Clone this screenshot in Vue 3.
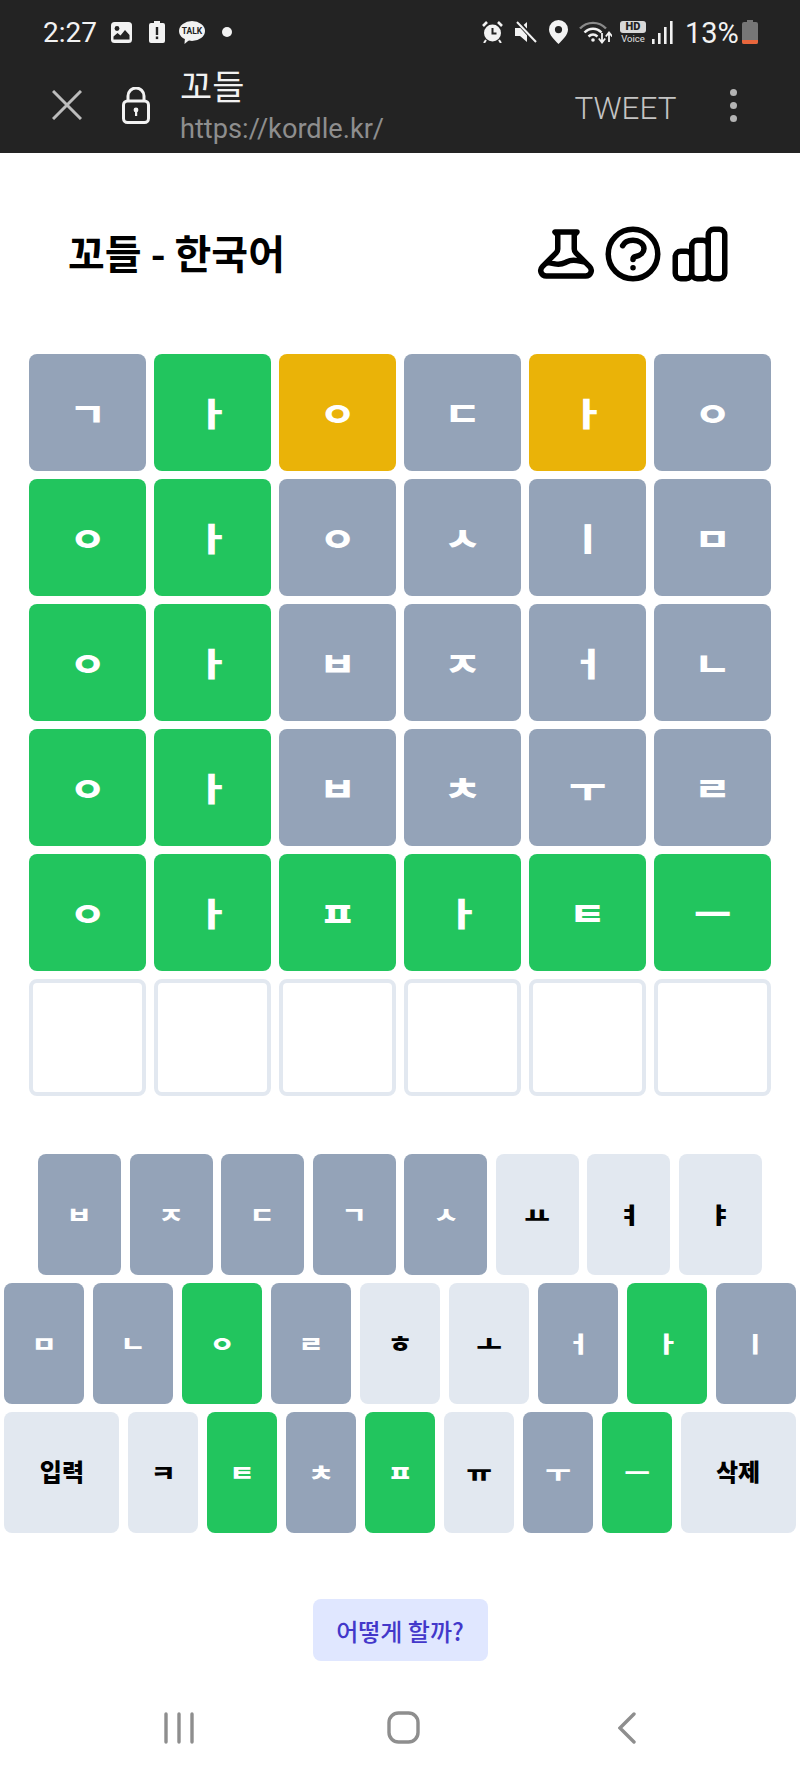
<script setup>
import { ref } from 'vue';

// a = absent, g = correct, y = present
const board = ref([
  [['ㄱ','a'],['ㅏ','g'],['ㅇ','y'],['ㄷ','a'],['ㅏ','y'],['ㅇ','a']],
  [['ㅇ','g'],['ㅏ','g'],['ㅇ','a'],['ㅅ','a'],['ㅣ','a'],['ㅁ','a']],
  [['ㅇ','g'],['ㅏ','g'],['ㅂ','a'],['ㅈ','a'],['ㅓ','a'],['ㄴ','a']],
  [['ㅇ','g'],['ㅏ','g'],['ㅂ','a'],['ㅊ','a'],['ㅜ','a'],['ㄹ','a']],
  [['ㅇ','g'],['ㅏ','g'],['ㅍ','g'],['ㅏ','g'],['ㅌ','g'],['ㅡ','g']],
  [['','e'],['','e'],['','e'],['','e'],['','e'],['','e']],
]);

const keyRows = ref([
  [['ㅂ','a'],['ㅈ','a'],['ㄷ','a'],['ㄱ','a'],['ㅅ','a'],['ㅛ','n'],['ㅕ','n'],['ㅑ','n']],
  [['ㅁ','a'],['ㄴ','a'],['ㅇ','g'],['ㄹ','a'],['ㅎ','n'],['ㅗ','n'],['ㅓ','a'],['ㅏ','g'],['ㅣ','a']],
  [['입력','n'],['ㅋ','n'],['ㅌ','g'],['ㅊ','a'],['ㅍ','g'],['ㅠ','n'],['ㅜ','a'],['ㅡ','g'],['삭제','n']],
]);
</script>

<template>
  <div class="page">
    <!-- status bar -->
    <div class="statusbar">
      <span class="time">2:27</span>
      <svg class="s-image" width="21" height="21" viewBox="0 0 21 21">
        <rect width="21" height="21" rx="3.5" fill="#f2f2f2" />
        <circle cx="6" cy="6.5" r="2.4" fill="#232323" />
        <path d="M2.5 17.5v-3l4-3.5 3 2.5 4.5-5.5 4.5 5v4.5z" fill="#232323" />
      </svg>
      <svg class="s-alert" width="16" height="22" viewBox="0 0 16 22">
        <path d="M5 0h6v2h3a2 2 0 012 2v16a2 2 0 01-2 2H2a2 2 0 01-2-2V4a2 2 0 012-2h3z" fill="#f2f2f2" />
        <rect x="6.8" y="6" width="2.4" height="8" fill="#232323" />
        <rect x="6.8" y="15.5" width="2.4" height="2.6" fill="#232323" />
      </svg>
      <svg class="s-talk" width="26" height="23" viewBox="0 0 26 23">
        <ellipse cx="13" cy="10" rx="13" ry="10" fill="#f2f2f2" />
        <path d="M6 16l-.5 7 6-5z" fill="#f2f2f2" />
        <text x="13" y="13" text-anchor="middle" class="talk-text">TALK</text>
      </svg>
      <span class="dot"></span>

      <svg class="s-alarm" width="21" height="22" viewBox="0 0 21 22">
        <circle cx="10.5" cy="12" r="8.5" fill="#f2f2f2" />
        <path d="M10.5 7v5.5h4" fill="none" stroke="#232323" stroke-width="2" />
        <path d="M1 5l4-4M20 5l-4-4" stroke="#f2f2f2" stroke-width="2.6" />
        <path d="M4 19l-2 3M17 19l2 3" stroke="#f2f2f2" stroke-width="2" />
      </svg>
      <svg class="s-mute" width="22" height="22" viewBox="0 0 22 22">
        <path d="M0 7h5l7-6v20l-7-6H0z" fill="#f2f2f2" />
        <path d="M3 1l18 20" stroke="#232323" stroke-width="4.5" />
        <path d="M2 1l19 20" stroke="#f2f2f2" stroke-width="2" />
      </svg>
      <svg class="s-pin" width="19" height="24" viewBox="0 0 19 24">
        <path fill-rule="evenodd" d="M9.5 0a9.5 9.5 0 019.5 9.5c0 5.5-5.5 10.5-9.5 14.5C5.500 20 0 15 0 9.500A9.5 9.5 0 019.500 0zm0 6a3.600 3.600 0 100 7.200 3.600 3.600 0 000-7.200z" fill="#f2f2f2" />
      </svg>
      <svg class="s-wifi" width="33" height="24" viewBox="0 0 33 24" fill="none">
        <path d="M1 8.500C8 1 20 1 27 8.500" stroke="#8a8a8a" stroke-width="2.400" />
        <path d="M5.500 12.500c5-5 12-5 17 0" stroke="#f2f2f2" stroke-width="2.400" />
        <path d="M9.500 16.500c3-2.800 6-2.800 9 0" stroke="#f2f2f2" stroke-width="2.400" />
        <circle cx="14" cy="20" r="1.800" fill="#f2f2f2" />
        <path d="M23 13v9M19.800 18.500l3.200 4 3.200-4" stroke="#f2f2f2" stroke-width="1.800" />
        <path d="M30 22v-9M26.800 16.500l3.200-4 3.200 4" stroke="#f2f2f2" stroke-width="1.800" />
      </svg>
      <div class="s-hd">
        <span class="hd">HD</span>
        <span class="voice">Voice</span>
      </div>
      <svg class="s-signal" width="21" height="23" viewBox="0 0 21 23">
        <rect x="0" y="18" width="2.600" height="5" fill="#f2f2f2" />
        <rect x="6" y="12" width="2.600" height="11" fill="#f2f2f2" />
        <rect x="12" y="6" width="2.600" height="17" fill="#f2f2f2" />
        <rect x="18" y="0" width="2.600" height="23" fill="#f2f2f2" />
      </svg>
      <span class="battery-text">13%</span>
      <svg class="s-battery" width="16" height="24" viewBox="0 0 16 24">
        <path d="M5 0h6v2h3a2 2 0 012 2v18a2 2 0 01-2 2H2a2 2 0 01-2-2V4a2 2 0 012-2h3z" fill="#777" />
        <path d="M0 20h16v2a2 2 0 01-2 2H2a2 2 0 01-2-2z" fill="#e8663c" />
      </svg>
    </div>

    <!-- browser bar -->
    <div class="appbar">
      <svg class="close" width="30" height="30" viewBox="0 0 30 30">
        <path d="M1 1l28 28M29 1L1 29" stroke="#bcbcbc" stroke-width="3" />
      </svg>
      <svg class="lock" width="28" height="37" viewBox="0 0 28 37" fill="none">
        <rect x="1.500" y="14" width="25" height="21.500" rx="4" stroke="#f2f2f2" stroke-width="3" />
        <path d="M6 14V9a8 8 0 0116 0v5" stroke="#f2f2f2" stroke-width="3" />
        <circle cx="14" cy="23" r="2.400" fill="#f2f2f2" />
        <rect x="13" y="24" width="2.200" height="5" fill="#f2f2f2" />
      </svg>
      <div class="page-info">
        <div class="page-title">꼬들</div>
        <div class="page-url">https://kordle.kr/</div>
      </div>
      <span class="tweet">TWEET</span>
      <div class="more">
        <span></span><span></span><span></span>
      </div>
    </div>

    <!-- game header -->
    <div class="header">
      <h1>꼬들 - 한국어</h1>
      <div class="header-icons">
        <svg viewBox="0 0 24 24" fill="none" stroke="#000" stroke-width="2" stroke-linecap="round" stroke-linejoin="round">
          <path d="M19.428 15.428a2 2 0 00-1.022-.547l-2.387-.477a6 6 0 00-3.860.517l-.318.158a6 6 0 01-3.860.517L6.050 15.210a2 2 0 00-1.806.547M8 4h8l-1 1v5.172a2 2 0 00.586 1.414l5 5c1.260 1.260.367 3.414-1.415 3.414H4.828c-1.782 0-2.674-2.154-1.414-3.414l5-5A2 2 0 009 10.172V5L8 4z" />
        </svg>
        <svg viewBox="0 0 24 24" fill="none" stroke="#000" stroke-width="2" stroke-linecap="round" stroke-linejoin="round">
          <path d="M8.228 9c.549-1.165 2.030-2 3.772-2 2.210 0 4 1.343 4 3 0 1.400-1.278 2.575-3.006 2.907-.542.104-.994.540-.994 1.093m0 3h.010M21 12a9 9 0 11-18 0 9 9 0 0118 0z" />
        </svg>
        <svg viewBox="0 0 24 24" fill="none" stroke="#000" stroke-width="2" stroke-linecap="round" stroke-linejoin="round">
          <path d="M9 19v-6a2 2 0 00-2-2H5a2 2 0 00-2 2v6a2 2 0 002 2h2a2 2 0 002-2zm0 0V9a2 2 0 012-2h2a2 2 0 012 2v10m-6 0a2 2 0 002 2h2a2 2 0 002-2m0 0V5a2 2 0 012-2h2a2 2 0 012 2v14a2 2 0 01-2 2h-2a2 2 0 01-2-2z" />
        </svg>
      </div>
    </div>

    <!-- board -->
    <div class="board">
      <template v-for="(row, r) in board" :key="r">
        <div v-for="(cell, c) in row" :key="c" class="tile" :class="'t-' + cell[1]">
          <span>{{ cell[0] }}</span>
        </div>
      </template>
    </div>

    <!-- keyboard -->
    <div class="keyboard">
      <div v-for="(row, r) in keyRows" :key="r" class="key-row" :class="'row-' + r">
        <button
          v-for="(key, k) in row"
          :key="k"
          class="key"
          :class="['k-' + key[1], { wide: key[0].length > 1 }]"
        ><span>{{ key[0] }}</span></button>
      </div>
    </div>

    <div class="how-wrap">
      <button class="how">어떻게 할까?</button>
    </div>

    <!-- android nav -->
    <div class="navbar">
      <svg width="30" height="32" viewBox="0 0 30 32">
        <path d="M2 2v28M15 2v28M28 2v28" stroke="#8e8e8e" stroke-width="3.400" stroke-linecap="round" />
      </svg>
      <svg width="33" height="33" viewBox="0 0 33 33" fill="none">
        <rect x="2" y="2" width="29" height="29" rx="9.500" stroke="#8e8e8e" stroke-width="3.400" />
      </svg>
      <svg width="18" height="32" viewBox="0 0 18 32" fill="none">
        <path d="M16 2L2 16l14 14" stroke="#8e8e8e" stroke-width="3.400" stroke-linecap="round" />
      </svg>
    </div>
  </div>
</template>

<style scoped>
.page {
  width: 800px;
  height: 1777px;
  overflow: hidden;
  background: #fff;
  font-family: "Noto Sans CJK KR", "Noto Sans", sans-serif;
}

/* ---- status bar ---- */
.statusbar {
  height: 64px;
  background: #232323;
  color: #f2f2f2;
  display: flex;
  align-items: center;
  padding-left: 43px;
  font-family: Roboto, sans-serif;
}
.time {
  font-size: 28px;
  line-height: 28px;
  width: 54px;
  margin-top: 2px;
}
.s-image { margin-left: 14px; }
.s-alert { margin-left: 17px; }
.s-talk { margin-left: 14px; }
.talk-text {
  font-family: Roboto, sans-serif;
  font-size: 8.500px;
  font-weight: 700;
  fill: #232323;
}
.dot {
  width: 10px;
  height: 10px;
  border-radius: 50%;
  background: #f2f2f2;
  margin-left: 17px;
}
.s-alarm { margin-left: 250px; }
.s-mute { margin-left: 12px; }
.s-pin { margin-left: 12px; }
.s-wifi { margin-left: 11px; }
.s-hd {
  margin-left: 8px;
  width: 26px;
  display: flex;
  flex-direction: column;
  align-items: center;
}
.hd {
  width: 26px;
  height: 12px;
  background: #d8d8d8;
  border-radius: 3px;
  color: #232323;
  font-size: 11px;
  line-height: 12px;
  font-weight: 900;
  text-align: center;
}
.voice {
  font-size: 9.500px;
  line-height: 11px;
  color: #e0e0e0;
}
.s-signal { margin-left: 6px; }
.battery-text {
  margin-left: 12px;
  width: 52px;
  font-size: 29px;
  line-height: 30px;
  white-space: nowrap;
  margin-top: 2px;
}
.s-battery { margin-left: 5px; }

/* ---- browser bar ---- */
.appbar {
  height: 89px;
  background: #232323;
  display: flex;
  align-items: center;
  padding: 0 0 7px 52px;
  box-sizing: border-box;
  font-family: Roboto, "Noto Sans CJK KR", sans-serif;
}
.lock { margin-left: 40px; }
.page-info {
  margin-left: 30px;
  width: 394.500px;
}
.page-title {
  color: #f2f2f2;
  font-family: "Noto Sans CJK KR", sans-serif;
  font-size: 35px;
  line-height: 38px;
  margin-top: 2px;
}
.page-url {
  color: #8e8e8e;
  font-size: 27.200px;
  line-height: 36px;
  margin-top: 7px;
}
.tweet {
  color: #c4c4c4;
  font-size: 31.400px;
  font-weight: 300;
  width: 156px;
  margin-top: 7px;
}
.more {
  display: flex;
  flex-direction: column;
  gap: 6px;
  margin-left: -0.500px;
}
.more span {
  width: 7px;
  height: 7px;
  border-radius: 50%;
  background: #b4b4b4;
}

/* ---- header ---- */
.header {
  display: flex;
  align-items: center;
  justify-content: space-between;
  padding: 67.500px 67px 67.500px 68px;
}
.header h1 {
  margin: 0 0 4px;
  font-size: 40px;
  line-height: 62px;
  font-weight: 700;
  color: #000;
}
.header-icons {
  display: flex;
  gap: 1px;
}
.header-icons svg {
  width: 66px;
  height: 66px;
}

/* ---- board ---- */
.board {
  display: grid;
  grid-template-columns: repeat(6, 117px);
  grid-auto-rows: 117px;
  gap: 8px;
  justify-content: center;
}
.tile {
  border-radius: 8px;
  display: flex;
  align-items: center;
  justify-content: center;
  padding-bottom: 2px;
  color: #fff;
  font-size: 32px;
  font-weight: 900;
  box-sizing: border-box;
}
/* jamo in the reference are drawn wider than the installed font */
.tile span {
  display: inline-block;
  transform: scaleX(1.25);
}
.t-a { background: #94a3b8; }
.t-g { background: #22c55e; }
.t-y { background: #eab308; }
.t-e { border: 4px solid #e2e8f0; }

/* ---- keyboard ---- */
.keyboard {
  margin-top: 58px;
  display: flex;
  flex-direction: column;
  gap: 8.500px;
}
.key-row {
  display: flex;
  justify-content: center;
}
.row-0 { gap: 8.600px; }
.row-1, .row-2 { gap: 8.900px; }
.key {
  height: 120.500px;
  padding: 0 0 3px;
  border: 0;
  border-radius: 8px;
  font-family: inherit;
  font-size: 22px;
  font-weight: 900;
  flex: none;
}
.key span {
  display: inline-block;
  transform: scaleX(1.25);
}
.row-0 .key { width: 83px; }
.row-1 .key { width: 80px; }
.row-2 .key { width: 70px; }
.row-2 .key.wide {
  width: 115px;
  font-size: 24px;
}
.row-2 .key.wide span {
  transform: none;
}
.k-a { background: #94a3b8; color: #fff; }
.k-g { background: #22c55e; color: #fff; }
.k-n { background: #e2e8f0; color: #000; }

/* ---- bottom ---- */
.how-wrap {
  margin-top: 66.500px;
  display: flex;
  justify-content: center;
}
.how {
  width: 175px;
  height: 62px;
  padding: 0;
  border: 0;
  border-radius: 8px;
  background: #e0e7ff;
  color: #4338ca;
  font-family: inherit;
  font-size: 24px;
  font-weight: 500;
}
.navbar {
  margin-top: 50px;
  padding-left: 6px;
  display: grid;
  grid-template-columns: repeat(3, 224px);
  justify-content: center;
  justify-items: center;
  align-items: center;
}
</style>

<style>
html, body {
  margin: 0;
  background: #fff;
}
</style>
